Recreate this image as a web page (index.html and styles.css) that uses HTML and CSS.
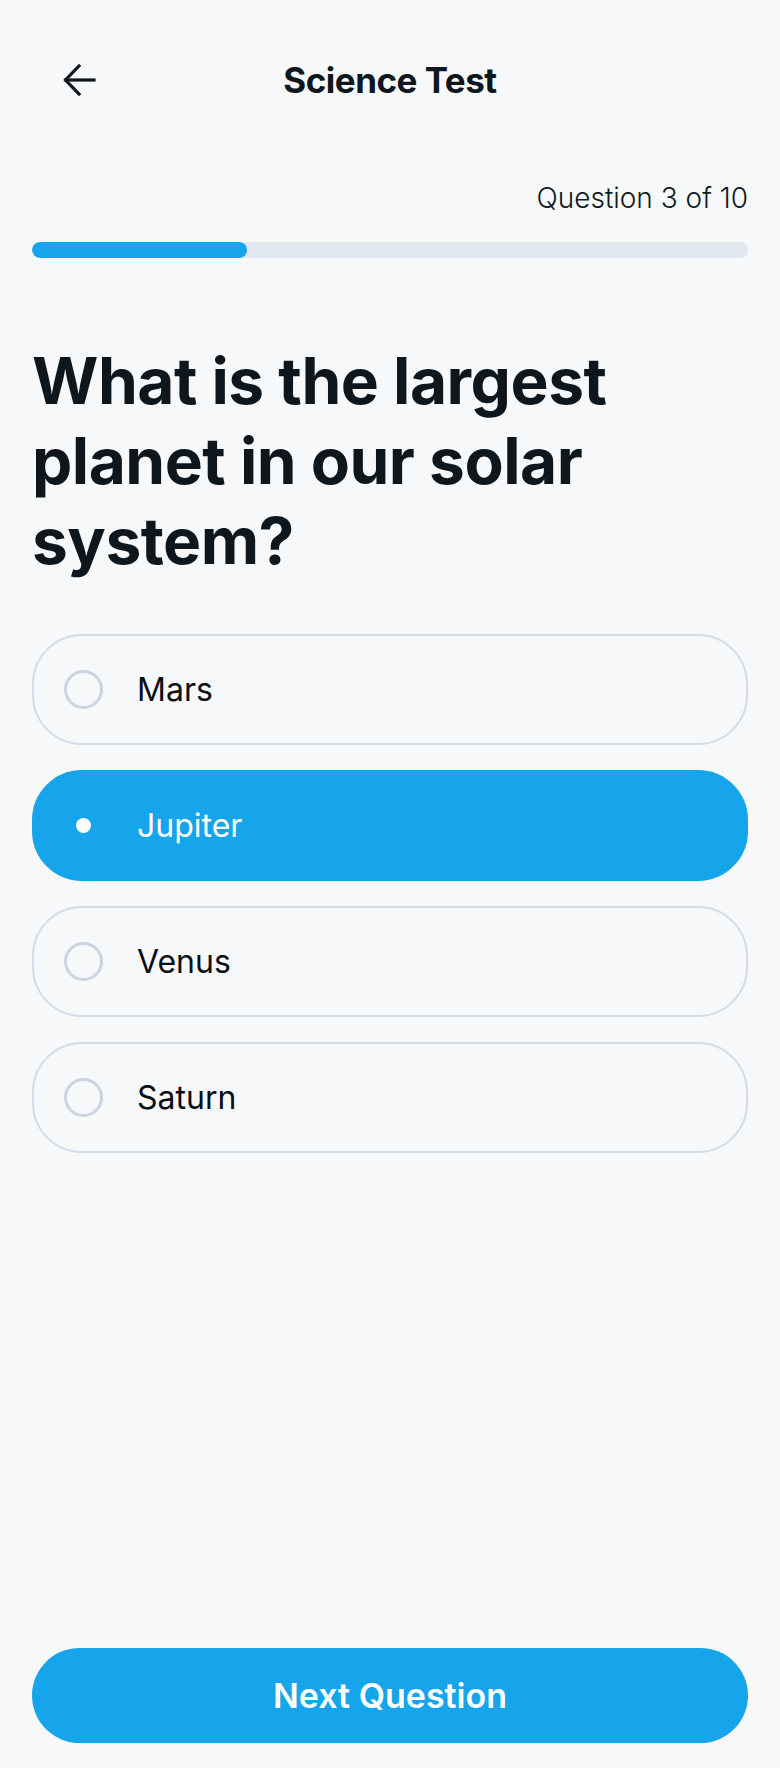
FILE: index.html
```html
<!DOCTYPE html>
<html lang="en">
<head>
<meta charset="utf-8">
<title>Science Test</title>
<link rel="stylesheet" href="styles.css">
</head>
<body>
<div class="screen">
  <header class="topbar">
    <button class="back" aria-label="Back">
      <svg width="34" height="32" viewBox="0 0 34 32" fill="none" stroke="#0E171D" stroke-width="3.2" stroke-linecap="square" stroke-linejoin="miter">
        <path d="M3 16H31"/>
        <path d="M16 2L2.5 16L16 30"/>
      </svg>
    </button>
    <h1 class="title">Science Test</h1>
    <span class="spacer"></span>
  </header>

  <section class="progress">
    <div class="progress-label">Question 3 of 10</div>
    <div class="track"><div class="fill" style="width:30%"></div></div>
  </section>

  <h2 class="question">What is the largest planet in our solar system?</h2>

  <ul class="options">
    <li class="option"><span class="radio"></span><span class="label">Mars</span></li>
    <li class="option selected"><span class="radio"></span><span class="label">Jupiter</span></li>
    <li class="option"><span class="radio"></span><span class="label">Venus</span></li>
    <li class="option"><span class="radio"></span><span class="label">Saturn</span></li>
  </ul>

  <button class="next">Next Question</button>
</div>
</body>
</html>
```
FILE: styles.css
```css
* { box-sizing: border-box; }
html, body { margin: 0; padding: 0; }
body {
  background: #F6F8FA;
  font-family: Inter, "Noto Sans", sans-serif;
  color: #0E171D;
}
.screen {
  min-height: 1768px;
  display: flex;
  flex-direction: column;
  padding: 0 32px 25px;
}
.topbar {
  height: 160px;
  display: grid;
  grid-template-columns: 1fr auto 1fr;
  align-items: center;
  margin: 0 -32px;
  padding: 0 48px;
}
.back {
  width: 64px;
  height: 64px;
  border: 0;
  background: transparent;
  padding: 0;
  display: flex;
  align-items: center;
  justify-content: center;
  justify-self: start;
}
.title {
  margin: 0;
  font-size: 35px;
  font-weight: 700;
  letter-spacing: -0.5px;
  line-height: 40px;
}
.progress {
  padding-top: 21px;
}
.progress-label {
  text-align: right;
  font-size: 28px;
  font-weight: 300;
  line-height: 34px;
  letter-spacing: 0;
  color: #111A20;
}
.track {
  margin-top: 27px;
  height: 16px;
  border-radius: 8px;
  background: #E2E8F0;
  overflow: hidden;
}
.fill {
  height: 100%;
  border-radius: 8px;
  background: #16A5EA;
}
.question {
  margin: 83px 0 0;
  font-size: 64px;
  font-weight: 700;
  line-height: 80px;
  letter-spacing: -0.5px;
  max-width: 640px;
}
.options {
  list-style: none;
  margin: 53px 0 0;
  padding: 0;
  display: flex;
  flex-direction: column;
  gap: 25px;
}
.option {
  height: 111px;
  border: 2px solid #D3DCE6;
  border-radius: 50px;
  display: flex;
  align-items: center;
  padding-left: 30px;
  gap: 34px;
  font-size: 32px;
  color: #0A0F12;
}
.radio {
  width: 39px;
  height: 39px;
  border-radius: 50%;
  border: 3px solid #CBD5E1;
  display: flex;
  align-items: center;
  justify-content: center;
  flex-shrink: 0;
}
.option.selected {
  background: #16A5EA;
  border-color: #16A5EA;
  color: #FFFFFF;
}
.option.selected .radio {
  border-color: transparent;
}
.option.selected .radio::after {
  content: "";
  width: 15px;
  height: 15px;
  border-radius: 50%;
  background: #FFFFFF;
}
.next {
  margin-top: auto;
  height: 95px;
  border: 0;
  border-radius: 48px;
  background: #16A5EA;
  color: #FFFFFF;
  font-family: Inter, "Noto Sans", sans-serif;
  font-size: 34px;
  font-weight: 600;
  letter-spacing: 0;
}
```
